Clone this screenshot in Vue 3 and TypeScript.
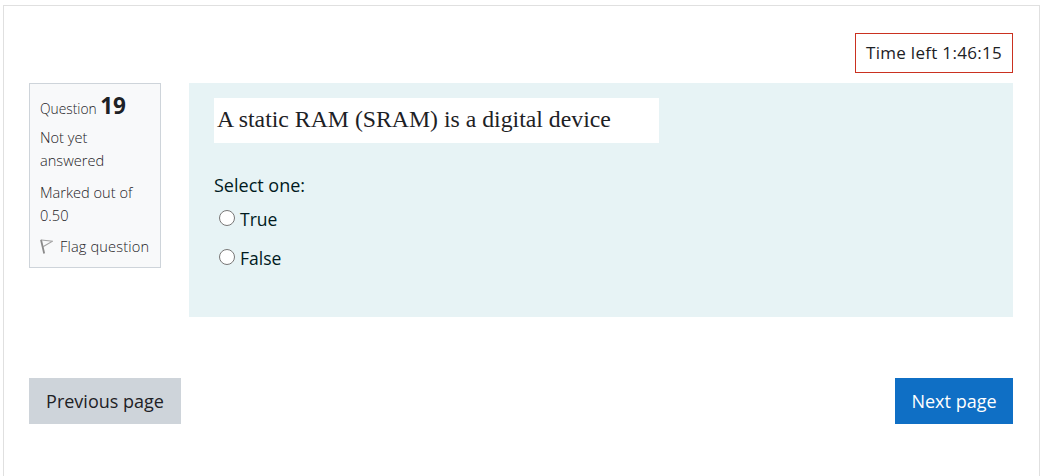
<script setup lang="ts">
import { ref } from 'vue'

const answer = ref('')
const options = ['True', 'False']
</script>

<template>
  <div class="page">
    <div class="timer-row">
      <div class="timer">Time left 1:46:15</div>
    </div>
    <div class="question">
      <div class="info">
        <h3 class="qno">Question <span>19</span></h3>
        <div class="state">Not yet answered</div>
        <div class="grade">Marked out of 0.50</div>
        <div class="flag">
          <svg width="13" height="15" viewBox="0 0 13 15" fill="none">
            <path d="M1 0.8 L4.2 14.5" stroke="#8a8a8a" stroke-width="1.8" />
            <path d="M1.5 1 L12.5 2.2 L3 7.8" stroke="#a2a2a2" stroke-width="1.1" />
          </svg>
          <span>Flag question</span>
        </div>
      </div>
      <div class="content">
        <div class="qtext">A static RAM (SRAM) is a digital device</div>
        <div class="prompt">Select one:</div>
        <div class="answers">
          <label v-for="o in options" :key="o" class="answer">
            <input v-model="answer" type="radio" name="q19" :value="o" />
            <span>{{ o }}</span>
          </label>
        </div>
      </div>
    </div>
    <div class="nav">
      <button class="btn prev">Previous page</button>
      <button class="btn next">Next page</button>
    </div>
  </div>
</template>

<style>
html,
body {
  background: #fff;
  overflow: hidden;
}
</style>

<style scoped>
.page {
  box-sizing: border-box;
  width: 1037px;
  height: 471px;
  margin: 5px 0 0 3px;
  padding: 27px 26px 0 25px;
  border: 1px solid #e0e0e0;
  border-bottom: 0;
  font-family: "Open Sans", "Noto Sans", sans-serif;
  color: #1d2125;
}
.timer-row {
  display: flex;
  justify-content: flex-end;
}
.timer {
  box-sizing: border-box;
  width: 158px;
  height: 40px;
  border: 1px solid #ca3120;
  font-size: 17px;
  letter-spacing: 0.3px;
  line-height: 38px;
  text-align: center;
}
.question {
  display: flex;
  align-items: flex-start;
  gap: 28px;
  margin-top: 10px;
}
.info {
  box-sizing: border-box;
  width: 132px;
  height: 185px;
  padding: 8px 10px 0;
  background: #f8f9fa;
  border: 1px solid #ced4da;
  font-size: 14.6px;
  font-weight: 300;
  line-height: 22.5px;
}
.qno {
  margin: 0;
  font-size: 13.8px;
  font-weight: 300;
  line-height: 28px;
}
.qno span {
  font-size: 22.5px;
  font-weight: 700;
}
.state {
  margin-top: 3px;
}
.grade {
  margin-top: 10px;
}
.flag {
  display: flex;
  align-items: center;
  gap: 7px;
  margin-top: 9px;
  letter-spacing: 0.15px;
  white-space: nowrap;
}
.content {
  box-sizing: border-box;
  flex: 1;
  height: 234px;
  padding: 15px 25px 0;
  background: #e7f3f5;
}
.qtext {
  box-sizing: border-box;
  width: 445px;
  height: 45px;
  padding-left: 3px;
  background: #fff;
  font-family: "Liberation Serif", serif;
  font-size: 23.75px;
  line-height: 43px;
  white-space: nowrap;
}
.prompt {
  margin-top: 29px;
  color: #001a1e;
  font-size: 18px;
  line-height: 26px;
}
.answers {
  display: flex;
  flex-direction: column;
  gap: 13px;
  margin-top: 8px;
  padding-left: 5px;
}
.answer {
  display: flex;
  align-items: center;
  gap: 5px;
  height: 26px;
  color: #001a1e;
  font-size: 17.5px;
}
.answer input {
  width: 16px;
  height: 16px;
  margin: 0 0 2px;
}
.nav {
  display: flex;
  justify-content: space-between;
  margin-top: 61px;
}
.btn {
  height: 46px;
  padding: 0;
  border: 0;
  font-family: inherit;
  font-size: 18px;
  white-space: nowrap;
}
.prev {
  width: 152px;
  background: #ced4da;
  color: #1d2125;
}
.next {
  width: 118px;
  background: #0f6fc5;
  color: #fff;
}
</style>
